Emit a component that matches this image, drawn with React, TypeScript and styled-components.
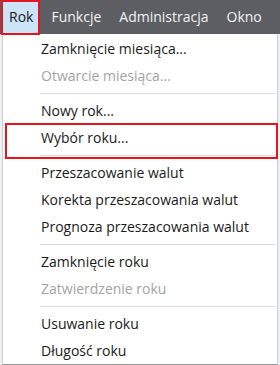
import React from "react";
import styled, { createGlobalStyle } from "styled-components";

const Global = createGlobalStyle`
  html, body { margin: 0; padding: 0; background: #eef0f2; }
  body { width: 280px; height: 365px; overflow: hidden; font-family: "Open Sans", "Noto Sans", sans-serif; }
`;

const Page = styled.div`
  width: 280px;
  height: 365px;
  display: flex;
  flex-direction: column;
`;

const MenuBar = styled.div`
  height: 34px;
  background: #5c5e64;
  display: flex;
  align-items: stretch;
  gap: 3px;
  padding-left: 1px;
`;

const BarItem = styled.div<{ $active?: boolean }>`
  position: relative;
  display: flex;
  align-items: center;
  padding: 0 7px 1px 8px;
  font-size: 14px;
  color: ${(p) => (p.$active ? "#1b1b1b" : "#f2f2f2")};
  background: ${(p) => (p.$active ? "#cce4f7" : "transparent")};
  &::after {
    content: "";
    display: ${(p) => (p.$active ? "block" : "none")};
    position: absolute;
    left: 0;
    top: 0;
    right: 0;
    bottom: -1px;
    border: 2px solid #e3151e;
    box-sizing: border-box;
  }
`;

const Dropdown = styled.div`
  margin-left: 2px;
  width: 276px;
  box-sizing: border-box;
  background: #ffffff;
  border: 1px solid #cfcfcf;
  border-top: none;
  border-bottom-color: #9a9a9a;
  padding-top: 1px;
  display: flex;
  flex-direction: column;
`;

const Item = styled.div<{ $disabled?: boolean }>`
  height: 27px;
  display: flex;
  align-items: center;
  padding-left: 38px;
  font-size: 14px;
  color: ${(p) => (p.$disabled ? "#a3a3a3" : "#1a1a1a")};
  white-space: nowrap;
`;

const Separator = styled.div`
  height: 8px;
  display: flex;
  align-items: center;
  padding-left: 37px;
  padding-right: 2px;
  &::before {
    content: "";
    flex: 1;
    height: 1px;
    background: #dcdcdc;
  }
`;

const Highlight = styled.div`
  position: relative;
  &::after {
    content: "";
    position: absolute;
    left: 2px;
    right: -1px;
    top: -1px;
    bottom: 0;
    border: 2px solid #e3151e;
    box-sizing: border-box;
  }
`;

export default function App() {
  return (
    <Page>
      <Global />
      <MenuBar>
        <BarItem $active>Rok</BarItem>
        <BarItem>Funkcje</BarItem>
        <BarItem>Administracja</BarItem>
        <BarItem>Okno</BarItem>
      </MenuBar>
      <Dropdown>
        <Item>Zamknięcie miesiąca...</Item>
        <Item $disabled>Otwarcie miesiąca...</Item>
        <Separator />
        <Item>Nowy rok...</Item>
        <Highlight>
          <Item>Wybór roku...</Item>
          <Separator />
        </Highlight>
        <Item>Przeszacowanie walut</Item>
        <Item>Korekta przeszacowania walut</Item>
        <Item>Prognoza przeszacowania walut</Item>
        <Separator />
        <Item>Zamknięcie roku</Item>
        <Item $disabled>Zatwierdzenie roku</Item>
        <Separator />
        <Item>Usuwanie roku</Item>
        <Item>Długość roku</Item>
      </Dropdown>
    </Page>
  );
}
